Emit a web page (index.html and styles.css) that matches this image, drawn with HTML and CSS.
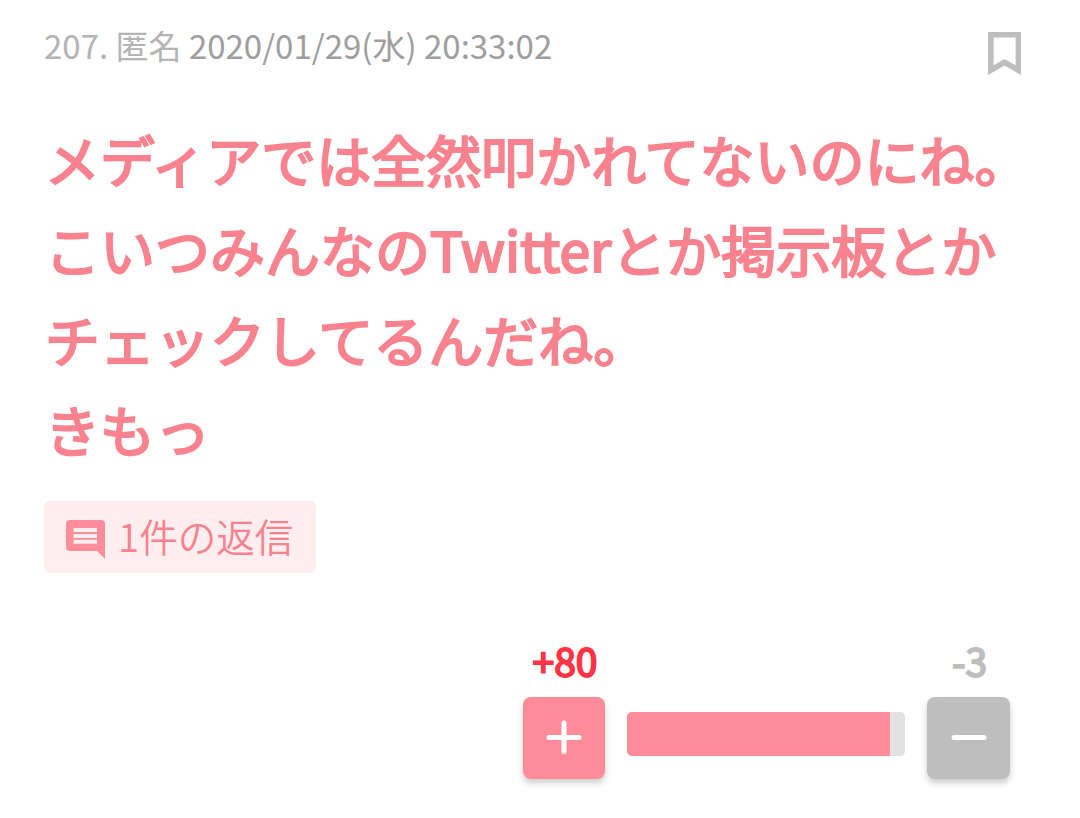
FILE: index.html
```html
<!DOCTYPE html>
<html lang="ja">
<head>
    <meta charset="UTF-8">
    <meta name="viewport" content="width=device-width, initial-scale=1.0">
    <title>コメント 207</title>
    <link rel="stylesheet" href="styles.css">
</head>
<body>
    <article class="comment">
        <header class="comment-header">
            <p class="comment-info">207. 匿名 <a class="date">2020/01/29(水) 20:33:02</a></p>
            <svg class="bookmark" viewBox="0 0 33 43">
                <path d="M0 0H33V43L16.5 33.5L0 43ZM5.6 5.4V33.3L16.5 27L27.6 33.3V5.4Z" fill="#bebebe" fill-rule="evenodd"/>
            </svg>
        </header>

        <div class="comment-body">
            メディアでは全然叩かれてないのにね。<br>
            こいつみんなのTwitterとか掲示板とか<br>
            チェックしてるんだね。<br>
            きもっ
        </div>

        <a class="reply">
            <svg class="reply-icon" viewBox="0 0 39 39">
                <path d="M4 0H35Q39 0 39 4V39L31 31H4Q0 31 0 27V4Q0 0 4 0Z" fill="#ff8c98"/>
                <path d="M7.5 10H31M7.5 16H31M7.5 21.8H31" stroke="#ffeef0" stroke-width="4"/>
            </svg>
            <span>1件の返信</span>
        </a>

        <div class="votes">
            <div class="vote plus">
                <p>+80</p>
                <button>
                    <svg viewBox="0 0 36 36"><path d="M3 17.5H33M18 3V31.5"/></svg>
                </button>
            </div>
            <div class="meter"><div class="meter-fill"></div></div>
            <div class="vote minus">
                <p>-3</p>
                <button>
                    <svg viewBox="0 0 36 36"><path d="M3 17.5H33"/></svg>
                </button>
            </div>
        </div>
    </article>
</body>
</html>
```
FILE: styles.css
```css
body {
    margin: 0;
    background: #fff;
    font-family: "Noto Sans CJK JP", sans-serif;
}
p {
    margin: 0;
}
.comment {
    box-sizing: border-box;
    min-height: 818px;
    padding: 20px 44px 0;
}
.comment-header {
    display: flex;
    justify-content: space-between;
    height: 93px;
}
.comment-info {
    font-size: 33px;
    line-height: 51px;
    color: #b3b3b3;
}
.date {
    color: #9e9e9e;
}
.bookmark {
    width: 33px;
    height: 43px;
    margin: 12px 15px 0 0;
}
.comment-body {
    padding-left: 1px;
    font-size: 55px;
    line-height: 90px;
    color: #f8828e;
    -webkit-text-stroke: 2.2px #f8828e;
    white-space: nowrap;
}
.reply {
    display: flex;
    align-items: flex-start;
    box-sizing: border-box;
    width: 272px;
    height: 72px;
    margin-top: 28px;
    padding-left: 22px;
    gap: 13px;
    border-radius: 5px;
    background: #ffeef0;
    color: #f8828e;
    font-size: 38.5px;
    font-weight: 350;
    line-height: 69px;
    white-space: nowrap;
}
.reply-icon {
    width: 39px;
    height: 39px;
    margin-top: 19px;
}
.votes {
    display: flex;
    justify-content: flex-end;
    gap: 22px;
    margin-top: 64px;
    padding-right: 26px;
}
.vote p {
    height: 60px;
    padding-left: 2px;
    font-size: 39px;
    line-height: 46px;
    text-align: center;
    color: #bebebe;
    -webkit-text-stroke: 1.9px #bebebe;
}
.plus p {
    color: #ff3344;
    -webkit-text-stroke-color: #ff3344;
}
.vote button {
    display: flex;
    align-items: center;
    justify-content: center;
    width: 83px;
    height: 82px;
    padding: 0;
    border: none;
    border-radius: 8px;
    background: #bebebe;
    box-shadow: 0 4px 6px rgba(0, 0, 0, 0.2);
}
.plus button {
    width: 82px;
    background: #ff8c98;
}
.vote svg {
    width: 36px;
    height: 36px;
    fill: none;
    stroke: #fff;
    stroke-width: 5;
    stroke-linecap: round;
}
.meter {
    width: 278px;
    height: 44px;
    margin-top: 75px;
    border-radius: 5px;
    background: #e2e2e2;
    overflow: hidden;
}
.meter-fill {
    width: 263px;
    height: 100%;
    background: #ff8c98;
}
```
